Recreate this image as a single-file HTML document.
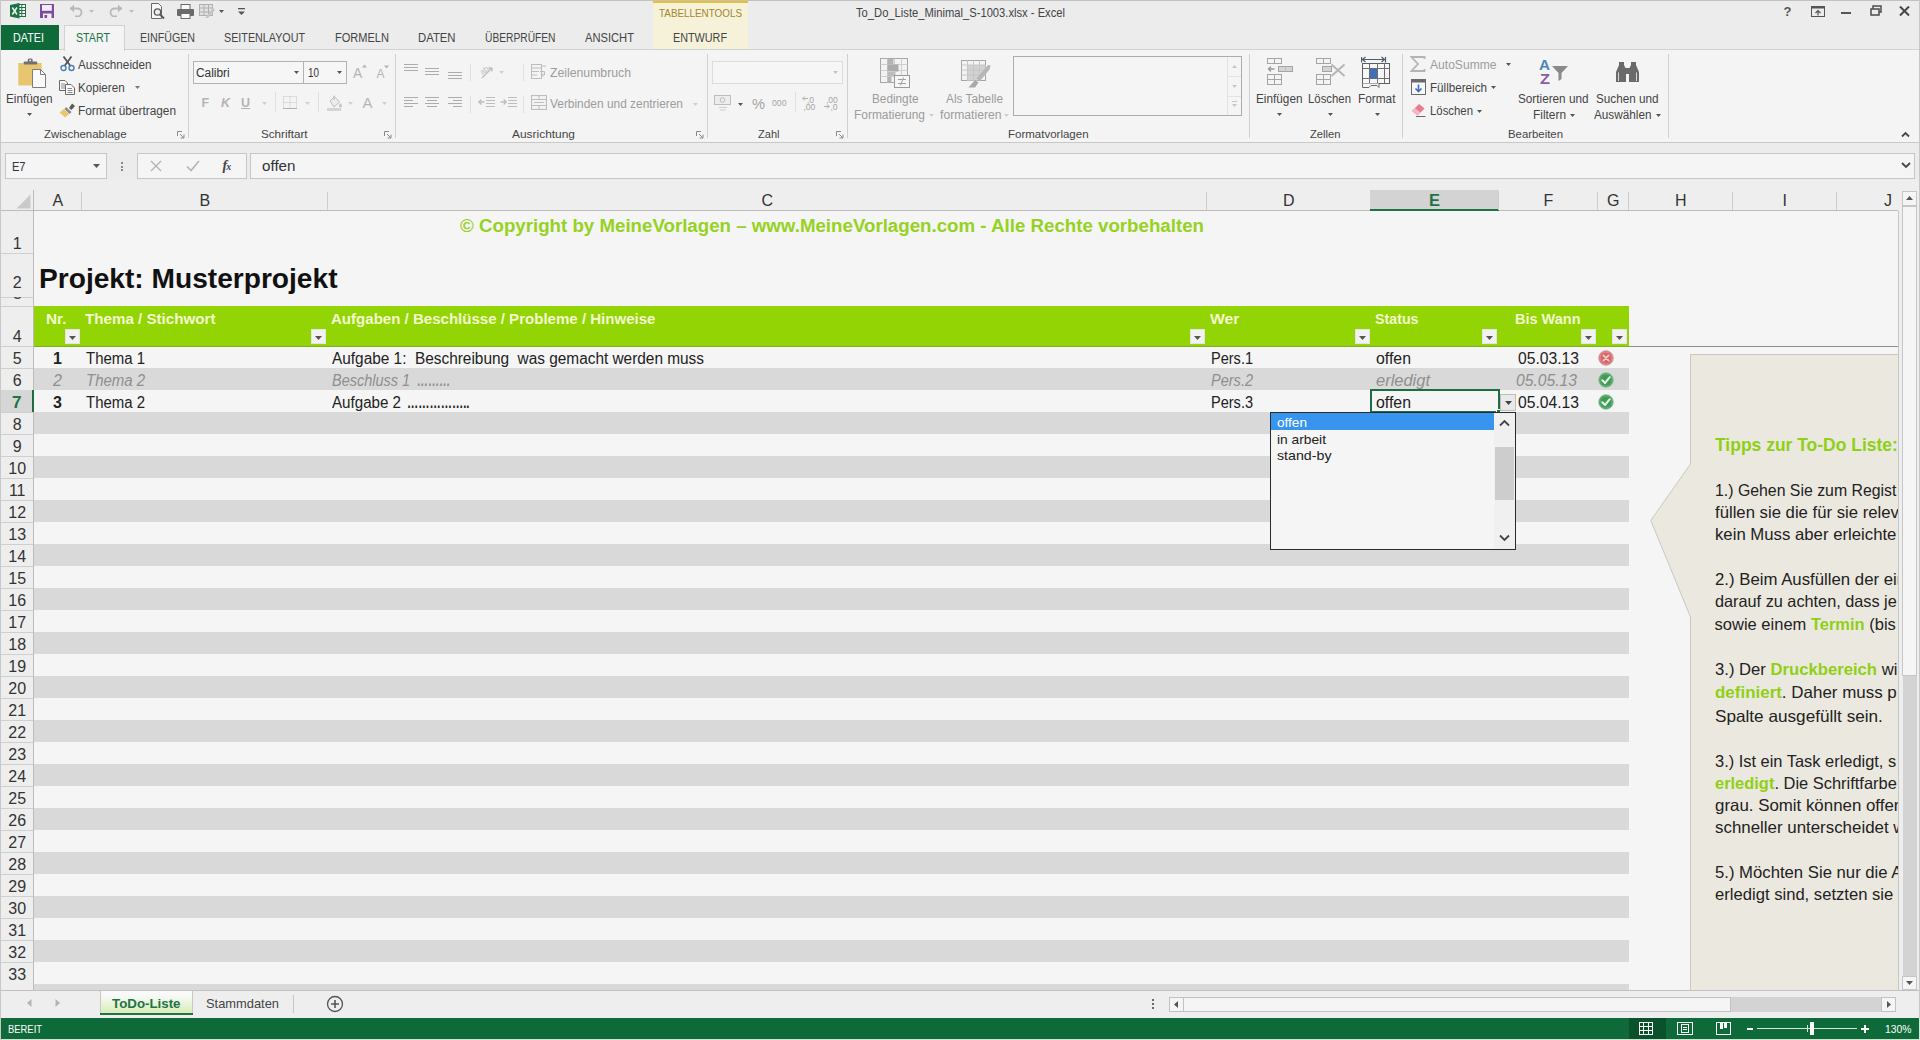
<!DOCTYPE html>
<html lang="de"><head><meta charset="utf-8"><title>To_Do_Liste_Minimal_S-1003.xlsx - Excel</title>
<style>
html,body{margin:0;padding:0;}
body{width:1920px;height:1040px;overflow:hidden;position:relative;background:#f4f4f4;font-family:"Liberation Sans",sans-serif;}
.b{position:absolute;box-sizing:border-box;display:block;}
.t{position:absolute;white-space:pre;display:block;}
</style></head>
<body>
<div class="b" style="left:0px;top:0px;width:1920px;height:50px;background:#ececec;"></div>
<div class="b" style="left:653px;top:0px;width:95px;height:49px;background:#f6f2da;"></div>
<div class="b" style="left:653px;top:0px;width:95px;height:3px;background:#e6c232;"></div>
<span class="t" style="top:8px;font-size:11px;line-height:11px;color:#a4862c;left:659px;transform-origin:0 0;transform:scaleX(0.8970);">TABELLENTOOLS</span>
<span class="t" style="top:7px;font-size:12px;line-height:12px;color:#444;left:855.5px;transform-origin:0 0;transform:scaleX(0.9326);">To_Do_Liste_Minimal_S-1003.xlsx - Excel</span>
<div class="b" style="left:0px;top:50px;width:1920px;height:92px;background:#f4f4f4;"></div>
<div class="b" style="left:0px;top:49px;width:1920px;height:1px;background:#d2d2d2;"></div>
<div class="b" style="left:0px;top:142px;width:1920px;height:1px;background:#c8c8c8;"></div>
<div class="b" style="left:0px;top:25px;width:59px;height:25px;background:#0f6a3a;"></div>
<span class="t" style="top:32px;font-size:12.5px;line-height:12.5px;color:#ffffff;left:13px;transform-origin:0 0;transform:scaleX(0.8637);">DATEI</span>
<div class="b" style="left:64px;top:25px;width:61px;height:26px;background:#f4f4f4;border:1px solid #d2d2d2;border-bottom:none;"></div>
<span class="t" style="top:32px;font-size:12.5px;line-height:12.5px;color:#217346;left:76px;transform-origin:0 0;transform:scaleX(0.8537);">START</span>
<span class="t" style="top:32px;font-size:12.5px;line-height:12.5px;color:#444;left:140px;transform-origin:0 0;transform:scaleX(0.8515);">EINFÜGEN</span>
<span class="t" style="top:32px;font-size:12.5px;line-height:12.5px;color:#444;left:224px;transform-origin:0 0;transform:scaleX(0.8596);">SEITENLAYOUT</span>
<span class="t" style="top:32px;font-size:12.5px;line-height:12.5px;color:#444;left:335px;transform-origin:0 0;transform:scaleX(0.8834);">FORMELN</span>
<span class="t" style="top:32px;font-size:12.5px;line-height:12.5px;color:#444;left:418px;transform-origin:0 0;transform:scaleX(0.9050);">DATEN</span>
<span class="t" style="top:32px;font-size:12.5px;line-height:12.5px;color:#444;left:485px;transform-origin:0 0;transform:scaleX(0.8186);">ÜBERPRÜFEN</span>
<span class="t" style="top:32px;font-size:12.5px;line-height:12.5px;color:#444;left:585px;transform-origin:0 0;transform:scaleX(0.8929);">ANSICHT</span>
<span class="t" style="top:32px;font-size:12.5px;line-height:12.5px;color:#444;left:673px;transform-origin:0 0;transform:scaleX(0.8640);">ENTWURF</span>
<svg class="b" style="left:10px;top:3px;" width="16" height="16" viewBox="0 0 16 16"><rect x="8" y="1.5" width="7.5" height="12" fill="#fbfbfb" stroke="#1e7145" stroke-width="1"/><path d="M8 4.5H15.5M8 7.5H15.5M8 10.5H15.5M11.8 1.5V13.5" stroke="#1e7145" stroke-width="1"/><path d="M0 2L9.5 0V15.5L0 13.5Z" fill="#1e7145"/><path d="M2.3 4.5L7 11.5M7 4.5L2.3 11.5" stroke="#e8f3ec" stroke-width="1.6"/></svg>
<svg class="b" style="left:40px;top:4px;" width="14" height="14" viewBox="0 0 14 14"><path d="M0 0H14V14H0Z" fill="#7a4e9c"/><rect x="2" y="1" width="9.8" height="5.8" fill="#f3ecf8"/><rect x="3" y="9.5" width="8.5" height="4.5" fill="#f3ecf8"/><rect x="4.5" y="11" width="2.6" height="3" fill="#7a4e9c"/></svg>
<svg class="b" style="left:69px;top:4px;" width="15" height="13" viewBox="0 0 15 13"><path d="M1 4.5H8.5A4 4 0 0 1 8.5 12.5H6" fill="none" stroke="#b9b9b9" stroke-width="1.8"/><path d="M5 0.5L0.8 4.5L5 8.5Z" fill="#b9b9b9"/></svg>
<svg class="b" style="left:89.0px;top:9.5px;" width="5" height="3" viewBox="0 0 5 3"><path d="M0 0H5L2.5 3Z" fill="#bdbdbd"/></svg>
<svg class="b" style="left:108px;top:4px;" width="15" height="13" viewBox="0 0 15 13"><path d="M14 4.5H6.5A4 4 0 0 0 6.5 12.5H9" fill="none" stroke="#b9b9b9" stroke-width="1.8"/><path d="M10 0.5L14.2 4.5L10 8.5Z" fill="#b9b9b9"/></svg>
<svg class="b" style="left:128.5px;top:9.5px;" width="5" height="3" viewBox="0 0 5 3"><path d="M0 0H5L2.5 3Z" fill="#bdbdbd"/></svg>
<svg class="b" style="left:150px;top:3px;" width="15" height="17" viewBox="0 0 15 17"><path d="M1.5 0.5H8.5L11.5 3.5V15.5H1.5Z" fill="#f8f8f8" stroke="#6a6a6a"/><circle cx="7.5" cy="9" r="3.2" fill="#e8f0f6" stroke="#5a5a5a" stroke-width="1.3"/><path d="M10 11.5L14 15.5" stroke="#5a5a5a" stroke-width="2"/></svg>
<svg class="b" style="left:177px;top:4px;" width="17" height="15" viewBox="0 0 17 15"><rect x="4" y="0.5" width="9" height="5" fill="#fafafa" stroke="#6a6a6a"/><rect x="0" y="5" width="17" height="7" rx="1" fill="#6a6a6a"/><rect x="4" y="9.5" width="9" height="5" fill="#fafafa" stroke="#6a6a6a"/></svg>
<svg class="b" style="left:199px;top:4px;" width="16" height="15" viewBox="0 0 16 15"><rect x="0.5" y="0.5" width="13" height="11" fill="#e2e2e2" stroke="#b0b0b0"/><path d="M0.5 4H13.5M0.5 8H13.5M5 0.5V11.5M9.5 0.5V11.5" stroke="#b0b0b0"/><path d="M6 14L14 4L16 6L9 14Z" fill="#c6c6c6"/></svg>
<svg class="b" style="left:219.0px;top:10.0px;" width="5" height="3" viewBox="0 0 5 3"><path d="M0 0H5L2.5 3Z" fill="#555"/></svg>
<svg class="b" style="left:238px;top:8px;" width="7" height="8" viewBox="0 0 7 8"><rect x="0" y="0" width="7" height="1.3" fill="#555"/><path d="M0 3.5H7L3.5 7Z" fill="#555"/></svg>
<span class="t" style="top:5px;font-size:13px;line-height:13px;color:#555;font-weight:bold;left:1787.5px;transform-origin:0 0;transform:translateX(-50%);">?</span>
<svg class="b" style="left:1811px;top:6px;" width="14" height="11" viewBox="0 0 14 11"><rect x="0.5" y="0.5" width="13" height="10" fill="none" stroke="#555"/><rect x="0.5" y="0.5" width="13" height="2" fill="#555"/><path d="M7 9.5V4.5M4.5 7L7 4.5L9.5 7" stroke="#555" fill="none" stroke-width="1.2"/></svg>
<div class="b" style="left:1841px;top:12px;width:10px;height:2px;background:#555;"></div>
<svg class="b" style="left:1870px;top:5px;" width="12" height="11" viewBox="0 0 12 11"><rect x="3" y="1" width="8" height="6" fill="none" stroke="#555" stroke-width="1.6"/><rect x="1" y="4" width="8" height="6" fill="#ececec" stroke="#555" stroke-width="1.6"/></svg>
<svg class="b" style="left:1899px;top:6px;" width="11" height="10" viewBox="0 0 11 10"><path d="M1 0.5L10 9.5M10 0.5L1 9.5" stroke="#444" stroke-width="2"/></svg>
<span class="t" style="top:129px;font-size:11.5px;line-height:11.5px;color:#444;left:44px;transform-origin:0 0;transform:scaleX(0.9927);">Zwischenablage</span>
<span class="t" style="top:129px;font-size:11.5px;line-height:11.5px;color:#444;left:260.5px;transform-origin:0 0;transform:scaleX(1.0105);">Schriftart</span>
<span class="t" style="top:129px;font-size:11.5px;line-height:11.5px;color:#444;left:512px;transform-origin:0 0;transform:scaleX(1.0373);">Ausrichtung</span>
<span class="t" style="top:129px;font-size:11.5px;line-height:11.5px;color:#444;left:758px;transform-origin:0 0;transform:scaleX(0.9609);">Zahl</span>
<span class="t" style="top:129px;font-size:11.5px;line-height:11.5px;color:#444;left:1008px;transform-origin:0 0;">Formatvorlagen</span>
<span class="t" style="top:129px;font-size:11.5px;line-height:11.5px;color:#444;left:1310px;transform-origin:0 0;transform:scaleX(0.9736);">Zellen</span>
<span class="t" style="top:129px;font-size:11.5px;line-height:11.5px;color:#444;left:1507.5px;transform-origin:0 0;transform:scaleX(0.9888);">Bearbeiten</span>
<div class="b" style="left:188px;top:54px;width:1px;height:84px;background:#d0d0d0;"></div>
<div class="b" style="left:395px;top:54px;width:1px;height:84px;background:#d0d0d0;"></div>
<div class="b" style="left:707px;top:54px;width:1px;height:84px;background:#d0d0d0;"></div>
<div class="b" style="left:847px;top:54px;width:1px;height:84px;background:#d0d0d0;"></div>
<div class="b" style="left:1249px;top:54px;width:1px;height:84px;background:#d0d0d0;"></div>
<div class="b" style="left:1402px;top:54px;width:1px;height:84px;background:#d0d0d0;"></div>
<div class="b" style="left:1668px;top:54px;width:1px;height:84px;background:#d0d0d0;"></div>
<svg class="b" style="left:177px;top:131px;" width="8" height="8" viewBox="0 0 8 8"><path d="M0.5 5V0.5H5" fill="none" stroke="#8a8a8a"/><path d="M3 3L7 7M7 3.5V7H3.5" fill="none" stroke="#8a8a8a"/></svg>
<svg class="b" style="left:384px;top:131px;" width="8" height="8" viewBox="0 0 8 8"><path d="M0.5 5V0.5H5" fill="none" stroke="#8a8a8a"/><path d="M3 3L7 7M7 3.5V7H3.5" fill="none" stroke="#8a8a8a"/></svg>
<svg class="b" style="left:696px;top:131px;" width="8" height="8" viewBox="0 0 8 8"><path d="M0.5 5V0.5H5" fill="none" stroke="#8a8a8a"/><path d="M3 3L7 7M7 3.5V7H3.5" fill="none" stroke="#8a8a8a"/></svg>
<svg class="b" style="left:836px;top:131px;" width="8" height="8" viewBox="0 0 8 8"><path d="M0.5 5V0.5H5" fill="none" stroke="#8a8a8a"/><path d="M3 3L7 7M7 3.5V7H3.5" fill="none" stroke="#8a8a8a"/></svg>
<svg class="b" style="left:1901px;top:131px;" width="9" height="7" viewBox="0 0 9 7"><path d="M1 5.5L4.5 2L8 5.5" fill="none" stroke="#444" stroke-width="1.8"/></svg>
<svg class="b" style="left:17px;top:57px;" width="30" height="31" viewBox="0 0 30 31"><rect x="1.3" y="6" width="23.3" height="22.5" fill="#e8c670"/><rect x="6.8" y="4.4" width="13.4" height="3.2" rx="0.8" fill="#707070"/><rect x="10.7" y="1.4" width="5" height="4" rx="1.5" fill="#707070"/><circle cx="13.2" cy="3.4" r="0.9" fill="#f4f4f4"/><path d="M15.5 12.5H23.5L28.5 17.5V30.5H15.5Z" fill="#fafafa" stroke="#7d7d7d"/><path d="M23.5 12.5V17.5H28.5" fill="none" stroke="#7d7d7d"/></svg>
<span class="t" style="top:93px;font-size:12px;line-height:12px;color:#444444;left:6.3px;transform-origin:0 0;transform:scaleX(0.9815);">Einfügen</span>
<svg class="b" style="left:27.0px;top:113.0px;" width="5" height="3" viewBox="0 0 5 3"><path d="M0 0H5L2.5 3Z" fill="#555"/></svg>
<svg class="b" style="left:60px;top:56px;" width="15" height="16" viewBox="0 0 15 16"><path d="M3.5 0.5L10.5 10M11.5 0.5L4.5 10" stroke="#555" stroke-width="1.8" fill="none"/><circle cx="3.5" cy="12" r="2.5" fill="none" stroke="#4a7db5" stroke-width="1.4"/><circle cx="11.5" cy="12" r="2.5" fill="none" stroke="#4a7db5" stroke-width="1.4"/></svg>
<span class="t" style="top:59px;font-size:12px;line-height:12px;color:#444444;left:78.3px;transform-origin:0 0;transform:scaleX(0.9749);">Ausschneiden</span>
<svg class="b" style="left:59px;top:80px;" width="16" height="15" viewBox="0 0 16 15"><path d="M0.5 0.5H6L8.5 3V10.5H0.5Z" fill="#fafafa" stroke="#6a6a6a"/><path d="M2 4H6M2 6H6M2 8H6" stroke="#8a8a8a"/><path d="M6.5 4.5H12L15.5 8V14.5H6.5Z" fill="#fafafa" stroke="#6a6a6a"/><path d="M8.5 8.5H13M8.5 10.5H13.5M8.5 12.5H13.5" stroke="#8a8a8a"/></svg>
<span class="t" style="top:82px;font-size:12px;line-height:12px;color:#444444;left:78.3px;transform-origin:0 0;transform:scaleX(0.9720);">Kopieren</span>
<svg class="b" style="left:134.5px;top:86.0px;" width="5" height="3" viewBox="0 0 5 3"><path d="M0 0H5L2.5 3Z" fill="#777"/></svg>
<svg class="b" style="left:59px;top:103px;" width="17" height="15" viewBox="0 0 17 15"><path d="M10 5L13 0.5L16 3L12.5 7Z" fill="#5a5a5a"/><path d="M7 4L12.5 9L10.5 11L5.5 6Z" fill="#8a8a8a"/><path d="M5 6L10 11L6 14.5L0.5 9.5Z" fill="#e9c66c"/></svg>
<span class="t" style="top:105px;font-size:12px;line-height:12px;color:#444444;left:78.3px;transform-origin:0 0;transform:scaleX(0.9860);">Format übertragen</span>
<div class="b" style="left:193px;top:61px;width:111px;height:23px;background:#f6f6f6;border:1px solid #b2b2b2;"></div>
<div class="b" style="left:303px;top:61px;width:44px;height:23px;background:#f6f6f6;border:1px solid #b2b2b2;"></div>
<span class="t" style="top:67px;font-size:12px;line-height:12px;color:#333;left:196px;transform-origin:0 0;transform:scaleX(0.9907);">Calibri</span>
<span class="t" style="top:67px;font-size:12px;line-height:12px;color:#333;left:308px;transform-origin:0 0;transform:scaleX(0.8234);">10</span>
<svg class="b" style="left:294.0px;top:70.5px;" width="5" height="3" viewBox="0 0 5 3"><path d="M0 0H5L2.5 3Z" fill="#555"/></svg>
<svg class="b" style="left:337.0px;top:70.5px;" width="5" height="3" viewBox="0 0 5 3"><path d="M0 0H5L2.5 3Z" fill="#555"/></svg>
<span class="t" style="top:66px;font-size:14px;line-height:14px;color:#b4b4b4;left:353px;transform-origin:0 0;">A</span>
<svg class="b" style="left:362px;top:64px;" width="5" height="4" viewBox="0 0 5 4"><path d="M0 3.5L2.5 0.5L5 3.5Z" fill="#b4b4b4"/></svg>
<span class="t" style="top:68px;font-size:12px;line-height:12px;color:#b4b4b4;left:376.5px;transform-origin:0 0;">A</span>
<svg class="b" style="left:384px;top:65px;" width="5" height="4" viewBox="0 0 5 4"><path d="M0 0.5L2.5 3.5L5 0.5Z" fill="#b4b4b4"/></svg>
<span class="t" style="top:97px;font-size:12.5px;line-height:12.5px;color:#b4b4b4;font-weight:bold;left:201.5px;transform-origin:0 0;">F</span>
<span class="t" style="top:97px;font-size:12.5px;line-height:12.5px;color:#b4b4b4;font-weight:bold;font-style:italic;left:221px;transform-origin:0 0;">K</span>
<span class="t" style="top:97px;font-size:12.5px;line-height:12.5px;color:#b4b4b4;font-weight:bold;left:241px;transform-origin:0 0;text-decoration:underline;">U</span>
<svg class="b" style="left:262.0px;top:102.0px;" width="5" height="3" viewBox="0 0 5 3"><path d="M0 0H5L2.5 3Z" fill="#cfcfcf"/></svg>
<div class="b" style="left:275px;top:92px;width:1px;height:20px;background:#e0e0e0;"></div>
<svg class="b" style="left:283px;top:96px;" width="14" height="13" viewBox="0 0 14 13"><rect x="0.5" y="0.5" width="13" height="12" fill="none" stroke="#c4c4c4" stroke-dasharray="1 1"/><path d="M7 0.5V12.5M0.5 6.5H13.5" stroke="#c4c4c4" stroke-dasharray="1 1"/><path d="M0 12.5H14" stroke="#b0b0b0"/></svg>
<svg class="b" style="left:305.0px;top:102.0px;" width="5" height="3" viewBox="0 0 5 3"><path d="M0 0H5L2.5 3Z" fill="#cfcfcf"/></svg>
<div class="b" style="left:318px;top:92px;width:1px;height:20px;background:#e0e0e0;"></div>
<svg class="b" style="left:326px;top:95px;" width="17" height="16" viewBox="0 0 17 16"><path d="M4 6L8.5 1.5L13.5 7L8 12Z" fill="#ececec" stroke="#bdbdbd"/><path d="M8 0.5V5" stroke="#bdbdbd"/><path d="M14.5 8C14.5 8 16 10 16 11A1.5 1.5 0 0 1 13 11C13 10 14.5 8 14.5 8Z" fill="#c4c4c4"/><rect x="1" y="13" width="14" height="3" fill="#d4d4d4"/></svg>
<svg class="b" style="left:348.0px;top:102.0px;" width="5" height="3" viewBox="0 0 5 3"><path d="M0 0H5L2.5 3Z" fill="#cfcfcf"/></svg>
<span class="t" style="top:95px;font-size:15px;line-height:15px;color:#b4b4b4;left:362.5px;transform-origin:0 0;">A</span>
<svg class="b" style="left:382.0px;top:102.0px;" width="5" height="3" viewBox="0 0 5 3"><path d="M0 0H5L2.5 3Z" fill="#cfcfcf"/></svg>
<svg class="b" style="left:404px;top:64px;" width="14" height="9" viewBox="0 0 14 9"><rect x="0" y="0" width="14" height="1" fill="#acacac"/><rect x="0" y="3" width="14" height="1" fill="#acacac"/><rect x="0" y="6" width="14" height="1" fill="#acacac"/></svg>
<svg class="b" style="left:425px;top:68px;" width="14" height="9" viewBox="0 0 14 9"><rect x="0" y="0" width="14" height="1" fill="#acacac"/><rect x="0" y="3" width="14" height="1" fill="#acacac"/><rect x="0" y="6" width="14" height="1" fill="#acacac"/></svg>
<svg class="b" style="left:448px;top:72px;" width="14" height="9" viewBox="0 0 14 9"><rect x="0" y="0" width="14" height="1" fill="#acacac"/><rect x="0" y="3" width="14" height="1" fill="#acacac"/><rect x="0" y="6" width="14" height="1" fill="#acacac"/></svg>
<svg class="b" style="left:404px;top:97px;" width="14" height="12" viewBox="0 0 14 12"><rect x="0" y="0" width="14" height="1" fill="#acacac"/><rect x="0" y="3" width="9" height="1" fill="#acacac"/><rect x="0" y="6" width="14" height="1" fill="#acacac"/><rect x="0" y="9" width="9" height="1" fill="#acacac"/></svg>
<svg class="b" style="left:425px;top:97px;" width="14" height="12" viewBox="0 0 14 12"><rect x="0" y="0" width="14" height="1" fill="#acacac"/><rect x="2" y="3" width="10" height="1" fill="#acacac"/><rect x="0" y="6" width="14" height="1" fill="#acacac"/><rect x="2" y="9" width="10" height="1" fill="#acacac"/></svg>
<svg class="b" style="left:448px;top:97px;" width="14" height="12" viewBox="0 0 14 12"><rect x="0" y="0" width="14" height="1" fill="#acacac"/><rect x="5" y="3" width="9" height="1" fill="#acacac"/><rect x="0" y="6" width="14" height="1" fill="#acacac"/><rect x="5" y="9" width="9" height="1" fill="#acacac"/></svg>
<div class="b" style="left:470px;top:64px;width:1px;height:17px;background:#e0e0e0;"></div>
<div class="b" style="left:470px;top:96px;width:1px;height:17px;background:#e0e0e0;"></div>
<div class="b" style="left:523px;top:64px;width:1px;height:17px;background:#e0e0e0;"></div>
<div class="b" style="left:523px;top:96px;width:1px;height:17px;background:#e0e0e0;"></div>
<svg class="b" style="left:479px;top:64px;" width="16" height="15" viewBox="0 0 16 15"><text x="2" y="9" font-size="8" fill="#bdbdbd" transform="rotate(-40 6 8)" font-family="Liberation Sans">ab</text><path d="M3 14L13 4M13 4H9.5M13 4V7.5" stroke="#bdbdbd" fill="none" stroke-width="1.3"/></svg>
<svg class="b" style="left:498.5px;top:70.5px;" width="5" height="3" viewBox="0 0 5 3"><path d="M0 0H5L2.5 3Z" fill="#cfcfcf"/></svg>
<svg class="b" style="left:478px;top:97px;" width="17" height="12" viewBox="0 0 17 12"><path d="M8 0.5H17M8 3.5H17M8 6.5H17M8 9.5H17" stroke="#bdbdbd" transform="translate(0,0)"/><path d="M6.5 5H0.8M3.3 2.5L0.8 5L3.3 7.5" stroke="#bdbdbd" fill="none" stroke-width="1.3"/></svg>
<svg class="b" style="left:500px;top:97px;" width="17" height="12" viewBox="0 0 17 12"><path d="M8 0.5H17M8 3.5H17M8 6.5H17M8 9.5H17" stroke="#bdbdbd"/><path d="M0.5 5H6.2M3.7 2.5L6.2 5L3.7 7.5" stroke="#bdbdbd" fill="none" stroke-width="1.3"/></svg>
<svg class="b" style="left:531px;top:64px;" width="16" height="15" viewBox="0 0 16 15"><rect x="0.5" y="0.5" width="10" height="14" fill="none" stroke="#bdbdbd"/><path d="M0.5 4H10.5M0.5 7.5H8M0.5 11H6" stroke="#bdbdbd"/><path d="M9 7.5H13.5V11H10.5M12 9.5L10.5 11L12 12.5" stroke="#bdbdbd" fill="none"/><path d="M10.5 2H15" stroke="#bdbdbd"/></svg>
<span class="t" style="top:67px;font-size:12px;line-height:12px;color:#9c9c9c;left:550px;transform-origin:0 0;transform:scaleX(1.0205);">Zeilenumbruch</span>
<svg class="b" style="left:531px;top:95px;" width="16" height="15" viewBox="0 0 16 15"><rect x="0.5" y="0.5" width="15" height="14" fill="none" stroke="#bdbdbd" stroke-width="1.2"/><path d="M0.5 4.5H15.5M0.5 10.5H15.5M8 0.5V4.5M8 10.5V14.5" stroke="#bdbdbd"/><path d="M3 7.5H13" stroke="#bdbdbd"/></svg>
<span class="t" style="top:98px;font-size:12px;line-height:12px;color:#9c9c9c;left:550px;transform-origin:0 0;transform:scaleX(0.9917);">Verbinden und zentrieren</span>
<svg class="b" style="left:693.0px;top:102.5px;" width="5" height="3" viewBox="0 0 5 3"><path d="M0 0H5L2.5 3Z" fill="#cfcfcf"/></svg>
<div class="b" style="left:712px;top:61px;width:131px;height:23px;background:#f6f6f6;border:1px solid #dcdcdc;"></div>
<svg class="b" style="left:833.0px;top:71.0px;" width="5" height="3" viewBox="0 0 5 3"><path d="M0 0H5L2.5 3Z" fill="#c4c4c4"/></svg>
<svg class="b" style="left:714px;top:95px;" width="18" height="16" viewBox="0 0 18 16"><rect x="0.5" y="0.5" width="16" height="9" fill="#ededed" stroke="#bdbdbd"/><circle cx="8.5" cy="5" r="2.3" fill="none" stroke="#bdbdbd"/><path d="M5 12.5H13M6 15H12" stroke="#d0d0d0"/></svg>
<svg class="b" style="left:737.5px;top:102.5px;" width="5" height="3" viewBox="0 0 5 3"><path d="M0 0H5L2.5 3Z" fill="#555"/></svg>
<span class="t" style="top:96px;font-size:15px;line-height:15px;color:#a4a4a4;left:751.5px;transform-origin:0 0;transform:scaleX(0.9742);">%</span>
<span class="t" style="top:98px;font-size:9.5px;line-height:9.5px;color:#a4a4a4;left:771.5px;transform-origin:0 0;transform:scaleX(0.9143);">000</span>
<div class="b" style="left:795px;top:92px;width:1px;height:20px;background:#e0e0e0;"></div>
<span class="t" style="top:96px;font-size:8.5px;line-height:8.5px;color:#a4a4a4;left:807px;transform-origin:0 0;">,0</span>
<span class="t" style="top:103px;font-size:8.5px;line-height:8.5px;color:#a4a4a4;left:803.5px;transform-origin:0 0;">,00</span>
<svg class="b" style="left:802px;top:96px;" width="6" height="5" viewBox="0 0 6 5"><path d="M6 2.5H0.8M2.8 0.5L0.8 2.5L2.8 4.5" stroke="#b0b0b0" fill="none"/></svg>
<span class="t" style="top:96px;font-size:8.5px;line-height:8.5px;color:#a4a4a4;left:826px;transform-origin:0 0;">,00</span>
<span class="t" style="top:103px;font-size:8.5px;line-height:8.5px;color:#a4a4a4;left:830.5px;transform-origin:0 0;">,0</span>
<svg class="b" style="left:824px;top:104px;" width="6" height="5" viewBox="0 0 6 5"><path d="M0 2.5H5.2M3.2 0.5L5.2 2.5L3.2 4.5" stroke="#b0b0b0" fill="none"/></svg>
<svg class="b" style="left:880px;top:58px;" width="31" height="31" viewBox="0 0 31 31"><rect x="0.5" y="0.5" width="27" height="24" fill="#f3f3f3" stroke="#a6a6a6"/><path d="M7.5 0.5V24.5" stroke="#cfcfcf"/><path d="M14.5 0.5V24.5" stroke="#cfcfcf"/><path d="M21.5 0.5V24.5" stroke="#cfcfcf"/><path d="M0.5 6.5H27.5" stroke="#cfcfcf"/><path d="M0.5 12.5H27.5" stroke="#cfcfcf"/><path d="M0.5 18.5H27.5" stroke="#cfcfcf"/><rect x="7.5" y="1" width="6" height="5" fill="#b4b4b4"/><rect x="7.5" y="6.5" width="11" height="7" fill="#ababab"/><rect x="7.5" y="14" width="8" height="4" fill="#bcbcbc"/><rect x="7.5" y="18.5" width="4" height="6" fill="#b4b4b4"/><rect x="14.5" y="17.5" width="15" height="12" fill="#f6f6f6" stroke="#9a9a9a"/><path d="M18 21.5H26M18 25.5H26M23.5 19.5L20.5 27.5" stroke="#a0a0a0"/></svg>
<span class="t" style="top:93px;font-size:12px;line-height:12px;color:#9c9c9c;left:871.7px;transform-origin:0 0;transform:scaleX(0.9815);">Bedingte</span>
<span class="t" style="top:109px;font-size:12px;line-height:12px;color:#9c9c9c;left:854px;transform-origin:0 0;transform:scaleX(0.9947);">Formatierung</span>
<svg class="b" style="left:928.5px;top:114.0px;" width="5" height="3" viewBox="0 0 5 3"><path d="M0 0H5L2.5 3Z" fill="#cfcfcf"/></svg>
<svg class="b" style="left:961px;top:60px;" width="32" height="29" viewBox="0 0 32 29"><rect x="0.5" y="0.5" width="24" height="20" fill="#f3f3f3" stroke="#a6a6a6"/><path d="M6.5 5H24.5V12L16.5 20.5H6.5Z" fill="#d2d2d2"/><path d="M6.5 0.5V20.5" stroke="#c6c6c6"/><path d="M12.5 0.5V20.5" stroke="#c6c6c6"/><path d="M18.5 0.5V20.5" stroke="#c6c6c6"/><path d="M0.5 5.0H24.5" stroke="#c6c6c6"/><path d="M0.5 10.0H24.5" stroke="#c6c6c6"/><path d="M0.5 15.0H24.5" stroke="#c6c6c6"/><path d="M7.5 27.5L14 20L17.5 22.5L14 27.5Z" fill="#a8a8a8"/><path d="M15.5 18.5L27 5L29.5 5.5L28.5 9.5L19 21Z" fill="#b6b6b6"/></svg>
<span class="t" style="top:93px;font-size:12px;line-height:12px;color:#9c9c9c;left:946px;transform-origin:0 0;transform:scaleX(0.9857);">Als Tabelle</span>
<span class="t" style="top:109px;font-size:12px;line-height:12px;color:#9c9c9c;left:939.5px;transform-origin:0 0;transform:scaleX(1.0131);">formatieren</span>
<svg class="b" style="left:1004.0px;top:113.5px;" width="5" height="3" viewBox="0 0 5 3"><path d="M0 0H5L2.5 3Z" fill="#cfcfcf"/></svg>
<div class="b" style="left:1013px;top:56px;width:229px;height:60px;background:#f5f5f5;border:1px solid #acacac;"></div>
<div class="b" style="left:1227px;top:57px;width:1px;height:58px;background:#e2e2e2;"></div>
<div class="b" style="left:1228px;top:76px;width:13px;height:1px;background:#e2e2e2;"></div>
<div class="b" style="left:1228px;top:96px;width:13px;height:1px;background:#e2e2e2;"></div>
<svg class="b" style="left:1232px;top:65px;" width="5" height="3" viewBox="0 0 5 3"><path d="M0 3L2.5 0L5 3Z" fill="#c6c6c6"/></svg>
<svg class="b" style="left:1232px;top:85px;" width="5" height="3" viewBox="0 0 5 3"><path d="M0 0L2.5 3L5 0Z" fill="#c6c6c6"/></svg>
<svg class="b" style="left:1232px;top:101px;" width="5" height="7" viewBox="0 0 5 7"><path d="M0 0.5H5" stroke="#c6c6c6"/><path d="M0 3L2.5 6L5 3Z" fill="#c6c6c6"/></svg>
<svg class="b" style="left:1267px;top:57px;" width="27" height="29" viewBox="0 0 27 29"><rect x="0.5" y="1.5" width="14" height="5" fill="#f4f4f4" stroke="#a4a4a4"/><path d="M7.5 1.5V6.5" stroke="#a4a4a4"/><rect x="11.5" y="9.5" width="14" height="5" fill="#d4d4d4" stroke="#a4a4a4"/><path d="M18.5 9.5V14.5" stroke="#bcbcbc"/><path d="M7.5 12H1.5M4 9.5L1.5 12L4 14.5" stroke="#9a9a9a" fill="none" stroke-width="1.4"/><rect x="0.5" y="17.5" width="14" height="10" fill="#f4f4f4" stroke="#a4a4a4"/><path d="M7.5 17.5V27.5M0.5 22.5H14.5" stroke="#a4a4a4"/></svg>
<span class="t" style="top:93px;font-size:12px;line-height:12px;color:#444444;left:1256px;transform-origin:0 0;transform:scaleX(0.9815);">Einfügen</span>
<svg class="b" style="left:1277.0px;top:113.0px;" width="5" height="3" viewBox="0 0 5 3"><path d="M0 0H5L2.5 3Z" fill="#555"/></svg>
<svg class="b" style="left:1316px;top:57px;" width="31" height="29" viewBox="0 0 31 29"><rect x="0.5" y="1.5" width="14" height="5" fill="#f4f4f4" stroke="#a4a4a4"/><path d="M7.5 1.5V6.5" stroke="#a4a4a4"/><rect x="6.5" y="9.5" width="9" height="5" fill="#d4d4d4" stroke="#a4a4a4"/><rect x="0.5" y="17.5" width="14" height="10" fill="#f4f4f4" stroke="#a4a4a4"/><path d="M7.5 17.5V27.5M0.5 22.5H14.5" stroke="#a4a4a4"/><path d="M15.5 7.5L28.5 19M28.5 7.5L15.5 19" stroke="#b4b4b4" stroke-width="1.8"/></svg>
<span class="t" style="top:93px;font-size:12px;line-height:12px;color:#444444;left:1308px;transform-origin:0 0;transform:scaleX(0.9477);">Löschen</span>
<svg class="b" style="left:1327.5px;top:113.0px;" width="5" height="3" viewBox="0 0 5 3"><path d="M0 0H5L2.5 3Z" fill="#555"/></svg>
<svg class="b" style="left:1361px;top:56px;" width="30" height="33" viewBox="0 0 30 33"><path d="M1.5 3.5H23.5M0.5 1V6.5M24.5 1V6.5M4.5 1L1.5 3.5L4.5 6M20.5 1L23.5 3.5L20.5 6" stroke="#4d5b6b" fill="none" stroke-width="1.2"/><rect x="1.5" y="7.5" width="27" height="20" fill="#f8f8f8" stroke="#5e5e5e"/><path d="M8.5 7.5V27.5M16.5 7.5V27.5M23.5 7.5V27.5M1.5 12.5H28.5M1.5 22.5H28.5" stroke="#6e6e6e"/><rect x="9" y="13" width="7" height="9.5" fill="#3f6fb5"/><path d="M1.5 27.5V31.5H8L10 29.5H16L18 31.5V27.5" stroke="#6a6a6a" fill="#f4f4f4"/></svg>
<span class="t" style="top:93px;font-size:12px;line-height:12px;color:#444444;left:1357.5px;transform-origin:0 0;transform:scaleX(0.9864);">Format</span>
<svg class="b" style="left:1374.5px;top:113.0px;" width="5" height="3" viewBox="0 0 5 3"><path d="M0 0H5L2.5 3Z" fill="#555"/></svg>
<svg class="b" style="left:1410px;top:56px;" width="16" height="16" viewBox="0 0 16 16"><path d="M14.5 3V1H1.5L8 8L1.5 15H14.5V13" fill="none" stroke="#b4b4b4" stroke-width="1.8"/></svg>
<span class="t" style="top:59px;font-size:12px;line-height:12px;color:#9c9c9c;left:1429.5px;transform-origin:0 0;transform:scaleX(1.0071);">AutoSumme</span>
<svg class="b" style="left:1506.0px;top:63.0px;" width="5" height="3" viewBox="0 0 5 3"><path d="M0 0H5L2.5 3Z" fill="#555"/></svg>
<svg class="b" style="left:1411px;top:79px;" width="15" height="16" viewBox="0 0 15 16"><rect x="0.5" y="0.5" width="14" height="15" fill="#f8f8f8" stroke="#6a6a6a"/><rect x="0.5" y="0.5" width="14" height="3" fill="#6a6a6a"/><path d="M7.5 5.5V12M4.5 9.5L7.5 12.5L10.5 9.5" stroke="#3f6fb5" stroke-width="1.6" fill="none"/></svg>
<span class="t" style="top:82px;font-size:12px;line-height:12px;color:#444444;left:1429.5px;transform-origin:0 0;transform:scaleX(0.9710);">Füllbereich</span>
<svg class="b" style="left:1491.0px;top:86.0px;" width="5" height="3" viewBox="0 0 5 3"><path d="M0 0H5L2.5 3Z" fill="#555"/></svg>
<svg class="b" style="left:1411px;top:103px;" width="15" height="14" viewBox="0 0 15 14"><path d="M1 8L8 1L13.5 5.5L6.5 12.5Z" fill="#e9798c"/><path d="M1 8L4 5L9.5 9.5L6.5 12.5Z" fill="#f4b6c0"/><path d="M5 13.5H14.5" stroke="#6a6a6a"/></svg>
<span class="t" style="top:105px;font-size:12px;line-height:12px;color:#444444;left:1429.5px;transform-origin:0 0;transform:scaleX(0.9477);">Löschen</span>
<svg class="b" style="left:1476.5px;top:109.5px;" width="5" height="3" viewBox="0 0 5 3"><path d="M0 0H5L2.5 3Z" fill="#555"/></svg>
<span class="t" style="top:57px;font-size:15px;line-height:15px;color:#4a86b8;font-weight:bold;left:1539px;transform-origin:0 0;transform:scaleX(1.0144);">A</span>
<span class="t" style="top:71px;font-size:15px;line-height:15px;color:#8a5ba8;font-weight:bold;left:1539.5px;transform-origin:0 0;transform:scaleX(1.0903);">Z</span>
<svg class="b" style="left:1552px;top:66px;" width="16" height="15" viewBox="0 0 16 15"><path d="M0 0H16L9.5 7V13L6.5 15V7Z" fill="#8a8a8a"/></svg>
<span class="t" style="top:93px;font-size:12px;line-height:12px;color:#444444;left:1518px;transform-origin:0 0;transform:scaleX(0.9785);">Sortieren und</span>
<span class="t" style="top:109px;font-size:12px;line-height:12px;color:#444444;left:1533px;transform-origin:0 0;transform:scaleX(0.9897);">Filtern</span>
<svg class="b" style="left:1569.5px;top:113.5px;" width="5" height="3" viewBox="0 0 5 3"><path d="M0 0H5L2.5 3Z" fill="#555"/></svg>
<svg class="b" style="left:1614px;top:60px;" width="27" height="23" viewBox="0 0 27 23"><path d="M2 22V12L5 5V2H10V5L12 9V22ZM15 22V9L17 5V2H22V5L25 12V22Z" fill="#6a6a6a"/><rect x="11" y="8" width="5" height="6" fill="#6a6a6a"/><path d="M4.5 12.5V21M22.5 12.5V21" stroke="#f4f4f4" stroke-width="0.8"/></svg>
<span class="t" style="top:93px;font-size:12px;line-height:12px;color:#444444;left:1596px;transform-origin:0 0;transform:scaleX(0.9756);">Suchen und</span>
<span class="t" style="top:109px;font-size:12px;line-height:12px;color:#444444;left:1594px;transform-origin:0 0;transform:scaleX(0.9792);">Auswählen</span>
<svg class="b" style="left:1655.5px;top:113.5px;" width="5" height="3" viewBox="0 0 5 3"><path d="M0 0H5L2.5 3Z" fill="#555"/></svg>
<div class="b" style="left:0px;top:143px;width:1920px;height:47px;background:#ececec;"></div>
<div class="b" style="left:5px;top:153px;width:102px;height:26px;background:#f5f5f5;border:1px solid #c6c6c6;"></div>
<span class="t" style="top:160px;font-size:13px;line-height:13px;color:#333;left:12px;transform-origin:0 0;transform:scaleX(0.8487);">E7</span>
<svg class="b" style="left:92.5px;top:163.5px;" width="7" height="4" viewBox="0 0 7 4"><path d="M0 0H7L3.5 4Z" fill="#555"/></svg>
<div class="b" style="left:121px;top:162px;width:2px;height:2px;background:#8a8a8a;"></div>
<div class="b" style="left:121px;top:165.5px;width:2px;height:2px;background:#8a8a8a;"></div>
<div class="b" style="left:121px;top:169px;width:2px;height:2px;background:#8a8a8a;"></div>
<div class="b" style="left:137px;top:153px;width:110px;height:26px;background:#f5f5f5;border:1px solid #c6c6c6;"></div>
<svg class="b" style="left:150px;top:160px;" width="12" height="12" viewBox="0 0 12 12"><path d="M1 1L11 11M11 1L1 11" stroke="#b4b4b4" stroke-width="1.4"/></svg>
<svg class="b" style="left:186px;top:160px;" width="14" height="12" viewBox="0 0 14 12"><path d="M1 6.5L5 10.5L13 1" stroke="#b4b4b4" stroke-width="1.6" fill="none"/></svg>
<span class="t" style="top:159px;font-size:14px;line-height:14px;color:#444;font-weight:bold;font-style:italic;font-family:'Liberation Serif',serif;left:222.5px;transform-origin:0 0;">f<span style="font-size:10px;margin-left:-1px;">x</span></span>
<div class="b" style="left:250px;top:153px;width:1665px;height:26px;background:#f5f5f5;border:1px solid #c6c6c6;"></div>
<span class="t" style="top:159px;font-size:14px;line-height:14px;color:#333;left:262px;transform-origin:0 0;transform:scaleX(1.0845);">offen</span>
<svg class="b" style="left:1901px;top:162px;" width="10" height="7" viewBox="0 0 10 7"><path d="M1 1L5 5L9 1" fill="none" stroke="#444" stroke-width="1.8"/></svg>
<div class="b" style="left:0px;top:190px;width:1898px;height:800px;background:#f5f5f5;"></div>
<div class="b" style="left:0px;top:180px;width:1920px;height:31px;background:#eeeeee;"></div>
<div class="b" style="left:0px;top:210px;width:1898px;height:1px;background:#bcbcbc;"></div>
<svg class="b" style="left:16px;top:194px;" width="15" height="15" viewBox="0 0 15 15"><path d="M14.5 0.5V14.5H0.5Z" fill="#c9c9c9"/></svg>
<span class="t" style="top:193px;font-size:16px;line-height:16px;color:#333;left:57.8px;transform-origin:0 0;transform:translateX(-50%);">A</span>
<div class="b" style="left:81px;top:192px;width:1px;height:18px;background:#cdcdcd;"></div>
<span class="t" style="top:193px;font-size:16px;line-height:16px;color:#333;left:204.8px;transform-origin:0 0;transform:translateX(-50%);">B</span>
<div class="b" style="left:327px;top:192px;width:1px;height:18px;background:#cdcdcd;"></div>
<span class="t" style="top:193px;font-size:16px;line-height:16px;color:#333;left:767.3px;transform-origin:0 0;transform:translateX(-50%);">C</span>
<div class="b" style="left:1206px;top:192px;width:1px;height:18px;background:#cdcdcd;"></div>
<span class="t" style="top:193px;font-size:16px;line-height:16px;color:#333;left:1288.8px;transform-origin:0 0;transform:translateX(-50%);">D</span>
<div class="b" style="left:1370px;top:192px;width:1px;height:18px;background:#cdcdcd;"></div>
<div class="b" style="left:1370px;top:190px;width:129px;height:21px;background:#d3d3d3;"></div>
<div class="b" style="left:1370px;top:209px;width:129px;height:2px;background:#217346;"></div>
<span class="t" style="top:193px;font-size:16px;line-height:16px;color:#217346;font-weight:bold;left:1429.30px;transform-origin:0 0;transform:scaleX(1.0307);">E</span>
<div class="b" style="left:1498px;top:192px;width:1px;height:18px;background:#cdcdcd;"></div>
<span class="t" style="top:193px;font-size:16px;line-height:16px;color:#333;left:1548.3px;transform-origin:0 0;transform:translateX(-50%);">F</span>
<div class="b" style="left:1597px;top:192px;width:1px;height:18px;background:#cdcdcd;"></div>
<span class="t" style="top:193px;font-size:16px;line-height:16px;color:#333;left:1613.3px;transform-origin:0 0;transform:translateX(-50%);">G</span>
<div class="b" style="left:1628px;top:192px;width:1px;height:18px;background:#cdcdcd;"></div>
<span class="t" style="top:193px;font-size:16px;line-height:16px;color:#333;left:1680.8px;transform-origin:0 0;transform:translateX(-50%);">H</span>
<div class="b" style="left:1732px;top:192px;width:1px;height:18px;background:#cdcdcd;"></div>
<span class="t" style="top:193px;font-size:16px;line-height:16px;color:#333;left:1784.8px;transform-origin:0 0;transform:translateX(-50%);">I</span>
<div class="b" style="left:1836px;top:192px;width:1px;height:18px;background:#cdcdcd;"></div>
<span class="t" style="top:193px;font-size:16px;line-height:16px;color:#333;left:1888px;transform-origin:0 0;transform:translateX(-50%);">J</span>
<div class="b" style="left:0px;top:211px;width:33px;height:779px;background:#eeeeee;"></div>
<div class="b" style="left:33px;top:190px;width:1px;height:800px;background:#bcbcbc;"></div>
<span class="t" style="top:236px;font-size:16px;line-height:16px;color:#333;left:17.2px;transform-origin:0 0;transform:translateX(-50%);">1</span>
<div class="b" style="left:0px;top:253px;width:33px;height:1px;background:#cfcfcf;"></div>
<span class="t" style="top:275px;font-size:16px;line-height:16px;color:#333;left:17.2px;transform-origin:0 0;transform:translateX(-50%);">2</span>
<div class="b" style="left:0px;top:297px;width:33px;height:1px;background:#cfcfcf;"></div>
<span class="t" style="top:329px;font-size:16px;line-height:16px;color:#333;left:17.2px;transform-origin:0 0;transform:translateX(-50%);">4</span>
<div class="b" style="left:0px;top:346px;width:33px;height:1px;background:#cfcfcf;"></div>
<span class="t" style="top:351px;font-size:16px;line-height:16px;color:#333;left:17.2px;transform-origin:0 0;transform:translateX(-50%);">5</span>
<div class="b" style="left:0px;top:368px;width:33px;height:1px;background:#cfcfcf;"></div>
<span class="t" style="top:373px;font-size:16px;line-height:16px;color:#333;left:17.2px;transform-origin:0 0;transform:translateX(-50%);">6</span>
<div class="b" style="left:0px;top:390px;width:33px;height:1px;background:#cfcfcf;"></div>
<div class="b" style="left:0px;top:390px;width:33px;height:22px;background:#d6d6d6;"></div>
<div class="b" style="left:32px;top:390px;width:2px;height:22px;background:#1f6e43;"></div>
<span class="t" style="top:395px;font-size:16px;line-height:16px;color:#217346;font-weight:bold;left:12.45px;transform-origin:0 0;transform:scaleX(1.0667);">7</span>
<div class="b" style="left:0px;top:412px;width:33px;height:1px;background:#cfcfcf;"></div>
<span class="t" style="top:417px;font-size:16px;line-height:16px;color:#333;left:17.2px;transform-origin:0 0;transform:translateX(-50%);">8</span>
<div class="b" style="left:0px;top:434px;width:33px;height:1px;background:#cfcfcf;"></div>
<span class="t" style="top:439px;font-size:16px;line-height:16px;color:#333;left:17.2px;transform-origin:0 0;transform:translateX(-50%);">9</span>
<div class="b" style="left:0px;top:456px;width:33px;height:1px;background:#cfcfcf;"></div>
<span class="t" style="top:461px;font-size:16px;line-height:16px;color:#333;left:17.2px;transform-origin:0 0;transform:translateX(-50%);">10</span>
<div class="b" style="left:0px;top:478px;width:33px;height:1px;background:#cfcfcf;"></div>
<span class="t" style="top:483px;font-size:16px;line-height:16px;color:#333;left:17.2px;transform-origin:0 0;transform:translateX(-50%);">11</span>
<div class="b" style="left:0px;top:500px;width:33px;height:1px;background:#cfcfcf;"></div>
<span class="t" style="top:505px;font-size:16px;line-height:16px;color:#333;left:17.2px;transform-origin:0 0;transform:translateX(-50%);">12</span>
<div class="b" style="left:0px;top:522px;width:33px;height:1px;background:#cfcfcf;"></div>
<span class="t" style="top:527px;font-size:16px;line-height:16px;color:#333;left:17.2px;transform-origin:0 0;transform:translateX(-50%);">13</span>
<div class="b" style="left:0px;top:544px;width:33px;height:1px;background:#cfcfcf;"></div>
<span class="t" style="top:549px;font-size:16px;line-height:16px;color:#333;left:17.2px;transform-origin:0 0;transform:translateX(-50%);">14</span>
<div class="b" style="left:0px;top:566px;width:33px;height:1px;background:#cfcfcf;"></div>
<span class="t" style="top:571px;font-size:16px;line-height:16px;color:#333;left:17.2px;transform-origin:0 0;transform:translateX(-50%);">15</span>
<div class="b" style="left:0px;top:588px;width:33px;height:1px;background:#cfcfcf;"></div>
<span class="t" style="top:593px;font-size:16px;line-height:16px;color:#333;left:17.2px;transform-origin:0 0;transform:translateX(-50%);">16</span>
<div class="b" style="left:0px;top:610px;width:33px;height:1px;background:#cfcfcf;"></div>
<span class="t" style="top:615px;font-size:16px;line-height:16px;color:#333;left:17.2px;transform-origin:0 0;transform:translateX(-50%);">17</span>
<div class="b" style="left:0px;top:632px;width:33px;height:1px;background:#cfcfcf;"></div>
<span class="t" style="top:637px;font-size:16px;line-height:16px;color:#333;left:17.2px;transform-origin:0 0;transform:translateX(-50%);">18</span>
<div class="b" style="left:0px;top:654px;width:33px;height:1px;background:#cfcfcf;"></div>
<span class="t" style="top:659px;font-size:16px;line-height:16px;color:#333;left:17.2px;transform-origin:0 0;transform:translateX(-50%);">19</span>
<div class="b" style="left:0px;top:676px;width:33px;height:1px;background:#cfcfcf;"></div>
<span class="t" style="top:681px;font-size:16px;line-height:16px;color:#333;left:17.2px;transform-origin:0 0;transform:translateX(-50%);">20</span>
<div class="b" style="left:0px;top:698px;width:33px;height:1px;background:#cfcfcf;"></div>
<span class="t" style="top:703px;font-size:16px;line-height:16px;color:#333;left:17.2px;transform-origin:0 0;transform:translateX(-50%);">21</span>
<div class="b" style="left:0px;top:720px;width:33px;height:1px;background:#cfcfcf;"></div>
<span class="t" style="top:725px;font-size:16px;line-height:16px;color:#333;left:17.2px;transform-origin:0 0;transform:translateX(-50%);">22</span>
<div class="b" style="left:0px;top:742px;width:33px;height:1px;background:#cfcfcf;"></div>
<span class="t" style="top:747px;font-size:16px;line-height:16px;color:#333;left:17.2px;transform-origin:0 0;transform:translateX(-50%);">23</span>
<div class="b" style="left:0px;top:764px;width:33px;height:1px;background:#cfcfcf;"></div>
<span class="t" style="top:769px;font-size:16px;line-height:16px;color:#333;left:17.2px;transform-origin:0 0;transform:translateX(-50%);">24</span>
<div class="b" style="left:0px;top:786px;width:33px;height:1px;background:#cfcfcf;"></div>
<span class="t" style="top:791px;font-size:16px;line-height:16px;color:#333;left:17.2px;transform-origin:0 0;transform:translateX(-50%);">25</span>
<div class="b" style="left:0px;top:808px;width:33px;height:1px;background:#cfcfcf;"></div>
<span class="t" style="top:813px;font-size:16px;line-height:16px;color:#333;left:17.2px;transform-origin:0 0;transform:translateX(-50%);">26</span>
<div class="b" style="left:0px;top:830px;width:33px;height:1px;background:#cfcfcf;"></div>
<span class="t" style="top:835px;font-size:16px;line-height:16px;color:#333;left:17.2px;transform-origin:0 0;transform:translateX(-50%);">27</span>
<div class="b" style="left:0px;top:852px;width:33px;height:1px;background:#cfcfcf;"></div>
<span class="t" style="top:857px;font-size:16px;line-height:16px;color:#333;left:17.2px;transform-origin:0 0;transform:translateX(-50%);">28</span>
<div class="b" style="left:0px;top:874px;width:33px;height:1px;background:#cfcfcf;"></div>
<span class="t" style="top:879px;font-size:16px;line-height:16px;color:#333;left:17.2px;transform-origin:0 0;transform:translateX(-50%);">29</span>
<div class="b" style="left:0px;top:896px;width:33px;height:1px;background:#cfcfcf;"></div>
<span class="t" style="top:901px;font-size:16px;line-height:16px;color:#333;left:17.2px;transform-origin:0 0;transform:translateX(-50%);">30</span>
<div class="b" style="left:0px;top:918px;width:33px;height:1px;background:#cfcfcf;"></div>
<span class="t" style="top:923px;font-size:16px;line-height:16px;color:#333;left:17.2px;transform-origin:0 0;transform:translateX(-50%);">31</span>
<div class="b" style="left:0px;top:940px;width:33px;height:1px;background:#cfcfcf;"></div>
<span class="t" style="top:945px;font-size:16px;line-height:16px;color:#333;left:17.2px;transform-origin:0 0;transform:translateX(-50%);">32</span>
<div class="b" style="left:0px;top:962px;width:33px;height:1px;background:#cfcfcf;"></div>
<span class="t" style="top:967px;font-size:16px;line-height:16px;color:#333;left:17.2px;transform-origin:0 0;transform:translateX(-50%);">33</span>
<div class="b" style="left:0px;top:984px;width:33px;height:1px;background:#cfcfcf;"></div>
<div class="b" style="left:0px;top:306px;width:33px;height:1px;background:#cfcfcf;"></div>
<div class="b" style="left:0px;top:297px;width:33px;height:9px;overflow:hidden;"><span class="t" style="left:13px;top:-11px;font-size:16px;line-height:16px;color:#444;">3</span></div>
<div class="b" style="left:0px;top:984px;width:33px;height:6px;background:#eeeeee;"></div>
<div class="b" style="left:34px;top:368px;width:1595px;height:22px;background:#d9d9d9;"></div>
<div class="b" style="left:34px;top:412px;width:1595px;height:22px;background:#d9d9d9;"></div>
<div class="b" style="left:34px;top:456px;width:1595px;height:22px;background:#d9d9d9;"></div>
<div class="b" style="left:34px;top:500px;width:1595px;height:22px;background:#d9d9d9;"></div>
<div class="b" style="left:34px;top:544px;width:1595px;height:22px;background:#d9d9d9;"></div>
<div class="b" style="left:34px;top:588px;width:1595px;height:22px;background:#d9d9d9;"></div>
<div class="b" style="left:34px;top:632px;width:1595px;height:22px;background:#d9d9d9;"></div>
<div class="b" style="left:34px;top:676px;width:1595px;height:22px;background:#d9d9d9;"></div>
<div class="b" style="left:34px;top:720px;width:1595px;height:22px;background:#d9d9d9;"></div>
<div class="b" style="left:34px;top:764px;width:1595px;height:22px;background:#d9d9d9;"></div>
<div class="b" style="left:34px;top:808px;width:1595px;height:22px;background:#d9d9d9;"></div>
<div class="b" style="left:34px;top:852px;width:1595px;height:22px;background:#d9d9d9;"></div>
<div class="b" style="left:34px;top:896px;width:1595px;height:22px;background:#d9d9d9;"></div>
<div class="b" style="left:34px;top:940px;width:1595px;height:22px;background:#d9d9d9;"></div>
<div class="b" style="left:34px;top:984px;width:1595px;height:6px;background:#d9d9d9;"></div>
<span class="t" style="top:217px;font-size:18px;line-height:18px;color:#95d222;font-weight:bold;left:459.9px;transform-origin:0 0;transform:scaleX(1.0385);">© Copyright by MeineVorlagen – www.MeineVorlagen.com - Alle Rechte vorbehalten</span>
<span class="t" style="top:265px;font-size:28px;line-height:28px;color:#111;font-weight:bold;left:38.7px;transform-origin:0 0;transform:scaleX(1.0045);">Projekt: Musterprojekt</span>
<div class="b" style="left:34px;top:306px;width:1595px;height:40px;background:#93d404;"></div>
<span class="t" style="top:312px;font-size:14px;line-height:14px;color:#f3facf;font-weight:bold;left:46.4px;transform-origin:0 0;transform:scaleX(1.0970);">Nr.</span>
<span class="t" style="top:312px;font-size:14px;line-height:14px;color:#f3facf;font-weight:bold;left:85.4px;transform-origin:0 0;transform:scaleX(1.0823);">Thema / Stichwort</span>
<span class="t" style="top:312px;font-size:14px;line-height:14px;color:#f3facf;font-weight:bold;left:331.4px;transform-origin:0 0;transform:scaleX(1.0749);">Aufgaben / Beschlüsse / Probleme / Hinweise</span>
<span class="t" style="top:312px;font-size:14px;line-height:14px;color:#f3facf;font-weight:bold;left:1210.4px;transform-origin:0 0;transform:scaleX(1.1258);">Wer</span>
<span class="t" style="top:312px;font-size:14px;line-height:14px;color:#f3facf;font-weight:bold;left:1375.4px;transform-origin:0 0;transform:scaleX(1.0164);">Status</span>
<span class="t" style="top:312px;font-size:14px;line-height:14px;color:#f3facf;font-weight:bold;left:1515.4px;transform-origin:0 0;transform:scaleX(1.0353);">Bis Wann</span>
<div class="b" style="left:65px;top:329px;width:15px;height:15px;background:#f2f2f2;border:1px solid #e4e4e4;"></div>
<svg class="b" style="left:69.0px;top:335.5px;" width="7" height="4" viewBox="0 0 7 4"><path d="M0 0H7L3.5 4Z" fill="#555"/></svg>
<div class="b" style="left:311px;top:329px;width:15px;height:15px;background:#f2f2f2;border:1px solid #e4e4e4;"></div>
<svg class="b" style="left:315.0px;top:335.5px;" width="7" height="4" viewBox="0 0 7 4"><path d="M0 0H7L3.5 4Z" fill="#555"/></svg>
<div class="b" style="left:1190px;top:329px;width:15px;height:15px;background:#f2f2f2;border:1px solid #e4e4e4;"></div>
<svg class="b" style="left:1194.0px;top:335.5px;" width="7" height="4" viewBox="0 0 7 4"><path d="M0 0H7L3.5 4Z" fill="#555"/></svg>
<div class="b" style="left:1355px;top:329px;width:15px;height:15px;background:#f2f2f2;border:1px solid #e4e4e4;"></div>
<svg class="b" style="left:1359.0px;top:335.5px;" width="7" height="4" viewBox="0 0 7 4"><path d="M0 0H7L3.5 4Z" fill="#555"/></svg>
<div class="b" style="left:1482px;top:329px;width:15px;height:15px;background:#f2f2f2;border:1px solid #e4e4e4;"></div>
<svg class="b" style="left:1486.0px;top:335.5px;" width="7" height="4" viewBox="0 0 7 4"><path d="M0 0H7L3.5 4Z" fill="#555"/></svg>
<div class="b" style="left:1581px;top:329px;width:15px;height:15px;background:#f2f2f2;border:1px solid #e4e4e4;"></div>
<svg class="b" style="left:1585.0px;top:335.5px;" width="7" height="4" viewBox="0 0 7 4"><path d="M0 0H7L3.5 4Z" fill="#555"/></svg>
<div class="b" style="left:1612px;top:329px;width:15px;height:15px;background:#f2f2f2;border:1px solid #e4e4e4;"></div>
<svg class="b" style="left:1616.0px;top:335.5px;" width="7" height="4" viewBox="0 0 7 4"><path d="M0 0H7L3.5 4Z" fill="#555"/></svg>
<div class="b" style="left:34px;top:346px;width:1864px;height:1px;background:#8c8c8c;"></div>
<div class="b" style="left:34px;top:346px;width:1595px;height:1px;background:#7fae2a;"></div>
<span class="t" style="top:351px;font-size:16px;line-height:16px;color:#222;font-weight:bold;left:57.5px;transform-origin:0 0;transform:translateX(-50%);">1</span>
<span class="t" style="top:351px;font-size:16px;line-height:16px;color:#222;left:85.8px;transform-origin:0 0;transform:scaleX(0.9344);">Thema 1</span>
<span class="t" style="top:351px;font-size:16px;line-height:16px;color:#222;left:331.8px;transform-origin:0 0;transform:scaleX(0.9615);">Aufgabe 1:  Beschreibung  was gemacht werden muss</span>
<span class="t" style="top:351px;font-size:16px;line-height:16px;color:#222;left:1210.8px;transform-origin:0 0;transform:scaleX(0.9081);">Pers.1</span>
<span class="t" style="top:351px;font-size:16px;line-height:16px;color:#222;left:1375.8px;transform-origin:0 0;transform:scaleX(0.9916);">offen</span>
<span class="t" style="top:351px;font-size:16px;line-height:16px;color:#222;left:1517.8px;transform-origin:0 0;transform:scaleX(0.9794);">05.03.13</span>
<span class="t" style="top:373px;font-size:16px;line-height:16px;color:#8f8f8f;font-style:italic;left:57.5px;transform-origin:0 0;transform:translateX(-50%);">2</span>
<span class="t" style="top:373px;font-size:16px;line-height:16px;color:#8f8f8f;font-style:italic;left:85.8px;transform-origin:0 0;transform:scaleX(0.9344);">Thema 2</span>
<span class="t" style="top:373px;font-size:16px;line-height:16px;color:#8f8f8f;font-style:italic;left:331.8px;transform-origin:0 0;transform:scaleX(0.9042);">Beschluss 1</span>
<span class="t" style="top:373px;font-size:16px;line-height:16px;color:#8f8f8f;font-weight:bold;font-style:italic;left:416.5px;transform-origin:0 0;transform:scaleX(0.6979);">………</span>
<span class="t" style="top:373px;font-size:16px;line-height:16px;color:#8f8f8f;font-style:italic;left:1210.8px;transform-origin:0 0;transform:scaleX(0.9081);">Pers.2</span>
<span class="t" style="top:373px;font-size:16px;line-height:16px;color:#8f8f8f;font-style:italic;left:1375.8px;transform-origin:0 0;transform:scaleX(1.0289);">erledigt</span>
<span class="t" style="top:373px;font-size:16px;line-height:16px;color:#8f8f8f;font-style:italic;left:1515.8px;transform-origin:0 0;transform:scaleX(0.9794);">05.05.13</span>
<span class="t" style="top:395px;font-size:16px;line-height:16px;color:#222;font-weight:bold;left:57.5px;transform-origin:0 0;transform:translateX(-50%);">3</span>
<span class="t" style="top:395px;font-size:16px;line-height:16px;color:#222;left:85.8px;transform-origin:0 0;transform:scaleX(0.9344);">Thema 2</span>
<span class="t" style="top:395px;font-size:16px;line-height:16px;color:#222;left:331.8px;transform-origin:0 0;transform:scaleX(0.9458);">Aufgabe 2</span>
<span class="t" style="top:395px;font-size:16px;line-height:16px;color:#222;font-weight:bold;left:406.5px;transform-origin:0 0;transform:scaleX(0.7031);">……………..</span>
<span class="t" style="top:395px;font-size:16px;line-height:16px;color:#222;left:1210.8px;transform-origin:0 0;transform:scaleX(0.9081);">Pers.3</span>
<span class="t" style="top:395px;font-size:16px;line-height:16px;color:#222;left:1375.8px;transform-origin:0 0;transform:scaleX(0.9916);">offen</span>
<span class="t" style="top:395px;font-size:16px;line-height:16px;color:#222;left:1517.8px;transform-origin:0 0;transform:scaleX(0.9794);">05.04.13</span>
<svg class="b" style="left:1598px;top:350px;" width="16" height="16" viewBox="0 0 16 16"><circle cx="8" cy="8" r="7.3" fill="#d96666" stroke="#cfa9a8" stroke-width="1"/><circle cx="8" cy="8" r="6" fill="none" stroke="#e48d8b" stroke-width="1"/><path d="M5.4 5.4L10.6 10.6M10.6 5.4L5.4 10.6" stroke="#f1cccc" stroke-width="1.7" stroke-linecap="round"/></svg>
<svg class="b" style="left:1598px;top:371.5px;" width="16" height="16" viewBox="0 0 16 16"><circle cx="8" cy="8" r="7.3" fill="#3f9b55" stroke="#9cc3a5" stroke-width="1"/><circle cx="8" cy="8" r="6" fill="none" stroke="#5fb574" stroke-width="1"/><path d="M4.3 8.3L7 11L11.8 5.2" stroke="#eaf6ec" stroke-width="2" fill="none" stroke-linecap="round" stroke-linejoin="round"/></svg>
<svg class="b" style="left:1598px;top:393.5px;" width="16" height="16" viewBox="0 0 16 16"><circle cx="8" cy="8" r="7.3" fill="#3f9b55" stroke="#9cc3a5" stroke-width="1"/><circle cx="8" cy="8" r="6" fill="none" stroke="#5fb574" stroke-width="1"/><path d="M4.3 8.3L7 11L11.8 5.2" stroke="#eaf6ec" stroke-width="2" fill="none" stroke-linecap="round" stroke-linejoin="round"/></svg>
<div class="b" style="left:1370px;top:389px;width:130px;height:24px;border:2px solid #1f6e43;"></div>
<div class="b" style="left:1496px;top:409px;width:5px;height:5px;background:#217346;border:1px solid #f5f5f5;"></div>
<div class="b" style="left:1500px;top:394px;width:16px;height:17px;background:#e9e9e9;border:1px solid #bdbdbd;"></div>
<svg class="b" style="left:1504.5px;top:401.0px;" width="7" height="4" viewBox="0 0 7 4"><path d="M0 0H7L3.5 4Z" fill="#444"/></svg>
<div class="b" style="left:1650px;top:354px;width:248px;height:636px;overflow:hidden;"><svg class="b" style="left:0;top:0" width="260" height="640"><polygon points="40.5,0.5 260,0.5 260,640 40.5,640 40.5,263 0.8,166.5 40.5,110" fill="#ebe8df" stroke="#c9c7c0" stroke-width="1"/></svg></div>
<div class="b" style="left:1700px;top:420px;width:198px;height:560px;overflow:hidden;">
<span class="t" style="top:15px;font-size:19px;line-height:19px;color:#222;left:14.599999999999909px;transform-origin:0 0;transform:scaleX(0.9200);"><span style="color:#8fd017;font-weight:bold;">Tipps zur To-Do Liste:</span></span>
<span class="t" style="top:62px;font-size:16.5px;line-height:16.5px;color:#222;left:14.599999999999909px;transform-origin:0 0;transform:scaleX(0.9602);">1.) Gehen Sie zum Regist</span>
<span class="t" style="top:84px;font-size:16.5px;line-height:16.5px;color:#222;left:14.599999999999909px;transform-origin:0 0;transform:scaleX(1.0127);">füllen sie die für sie relevanten</span>
<span class="t" style="top:106px;font-size:16.5px;line-height:16.5px;color:#222;left:14.599999999999909px;transform-origin:0 0;transform:scaleX(1.0143);">kein Muss aber erleichte</span>
<span class="t" style="top:151px;font-size:16.5px;line-height:16.5px;color:#222;left:14.599999999999909px;transform-origin:0 0;transform:scaleX(1.0165);">2.) Beim Ausfüllen der einzelnen</span>
<span class="t" style="top:173px;font-size:16.5px;line-height:16.5px;color:#222;left:14.599999999999909px;transform-origin:0 0;transform:scaleX(0.9860);">darauf zu achten, dass je</span>
<span class="t" style="top:196px;font-size:16.5px;line-height:16.5px;color:#222;left:14.599999999999909px;transform-origin:0 0;">sowie einem <span style="color:#8fd017;font-weight:bold;">Termin</span> (bis</span>
<span class="t" style="top:241px;font-size:16.5px;line-height:16.5px;color:#222;left:14.599999999999909px;transform-origin:0 0;transform:scaleX(1.0097);">3.) Der <span style="color:#8fd017;font-weight:bold;">Druckbereich</span> wi</span>
<span class="t" style="top:264px;font-size:16.5px;line-height:16.5px;color:#222;left:14.599999999999909px;transform-origin:0 0;transform:scaleX(1.0273);"><span style="color:#8fd017;font-weight:bold;">definiert</span>. Daher muss p</span>
<span class="t" style="top:288px;font-size:16.5px;line-height:16.5px;color:#222;left:14.599999999999909px;transform-origin:0 0;transform:scaleX(1.0399);">Spalte ausgefüllt sein.</span>
<span class="t" style="top:333px;font-size:16.5px;line-height:16.5px;color:#222;left:14.599999999999909px;transform-origin:0 0;transform:scaleX(0.9945);">3.) Ist ein Task erledigt, s</span>
<span class="t" style="top:355px;font-size:16.5px;line-height:16.5px;color:#222;left:14.599999999999909px;transform-origin:0 0;transform:scaleX(0.9962);"><span style="color:#8fd017;font-weight:bold;">erledigt</span>. Die Schriftfarbe</span>
<span class="t" style="top:377px;font-size:16.5px;line-height:16.5px;color:#222;left:14.599999999999909px;transform-origin:0 0;transform:scaleX(1.0223);">grau. Somit können offene</span>
<span class="t" style="top:399px;font-size:16.5px;line-height:16.5px;color:#222;left:14.599999999999909px;transform-origin:0 0;transform:scaleX(1.0231);">schneller unterscheidet werden</span>
<span class="t" style="top:444px;font-size:16.5px;line-height:16.5px;color:#222;left:14.599999999999909px;transform-origin:0 0;transform:scaleX(1.0118);">5.) Möchten Sie nur die Aufgaben</span>
<span class="t" style="top:466px;font-size:16.5px;line-height:16.5px;color:#222;left:14.599999999999909px;transform-origin:0 0;transform:scaleX(1.0073);">erledigt sind, setzten sie</span>
</div>
<div class="b" style="left:1898px;top:180px;width:22px;height:810px;background:#eeeeee;"></div>
<div class="b" style="left:1898px;top:211px;width:1px;height:779px;background:#c6c6c6;"></div>
<div class="b" style="left:1903px;top:206px;width:14px;height:771px;background:#d3d3d3;"></div>
<div class="b" style="left:1902px;top:191px;width:15px;height:15px;background:#f5f5f5;border:1px solid #c6c6c6;"></div>
<svg class="b" style="left:1906px;top:196px;" width="7" height="4" viewBox="0 0 7 4"><path d="M0 4L3.5 0L7 4Z" fill="#555"/></svg>
<div class="b" style="left:1902px;top:206px;width:15px;height:470px;background:#f5f5f5;border:1px solid #c6c6c6;"></div>
<div class="b" style="left:1902px;top:976px;width:15px;height:14px;background:#f5f5f5;border:1px solid #c6c6c6;"></div>
<svg class="b" style="left:1906px;top:981px;" width="7" height="4" viewBox="0 0 7 4"><path d="M0 0L3.5 4L7 0Z" fill="#555"/></svg>
<div class="b" style="left:1270px;top:412px;width:246px;height:138px;background:#f5f5f5;border:1px solid #2b2b2b;"></div>
<div class="b" style="left:1271px;top:413px;width:223px;height:17px;background:#3795f0;"></div>
<span class="t" style="top:416px;font-size:13px;line-height:13px;color:#fff;left:1276.5px;transform-origin:0 0;transform:scaleX(1.0458);">offen</span>
<span class="t" style="top:433px;font-size:13px;line-height:13px;color:#222;left:1276.5px;transform-origin:0 0;transform:scaleX(1.0595);">in arbeit</span>
<span class="t" style="top:449px;font-size:13px;line-height:13px;color:#222;left:1276.5px;transform-origin:0 0;transform:scaleX(1.0927);">stand-by</span>
<div class="b" style="left:1494px;top:413px;width:21px;height:136px;background:#f0f0f0;"></div>
<div class="b" style="left:1495px;top:447px;width:19px;height:53px;background:#cdcdcd;"></div>
<svg class="b" style="left:1499px;top:419px;" width="11" height="8" viewBox="0 0 11 8"><path d="M1 6.5L5.5 2L10 6.5" fill="none" stroke="#444" stroke-width="1.8"/></svg>
<svg class="b" style="left:1499px;top:534px;" width="11" height="8" viewBox="0 0 11 8"><path d="M1 1.5L5.5 6L10 1.5" fill="none" stroke="#444" stroke-width="1.8"/></svg>
<div class="b" style="left:0px;top:990px;width:1920px;height:28px;background:#eeeeee;"></div>
<div class="b" style="left:0px;top:990px;width:1920px;height:1px;background:#c2c2c2;"></div>
<svg class="b" style="left:27px;top:999px;" width="5" height="8" viewBox="0 0 5 8"><path d="M4.5 0V8L0 4Z" fill="#b4b4b4"/></svg>
<svg class="b" style="left:55px;top:999px;" width="5" height="8" viewBox="0 0 5 8"><path d="M0.5 0V8L5 4Z" fill="#b4b4b4"/></svg>
<div class="b" style="left:100px;top:991px;width:93px;height:24px;background:linear-gradient(#fafafa 15%,#d4ecb2);border-left:1px solid #c8c8c8;border-right:1px solid #c8c8c8;"></div>
<div class="b" style="left:100px;top:1013px;width:93px;height:2px;background:#217346;"></div>
<span class="t" style="top:997px;font-size:13px;line-height:13px;color:#217346;font-weight:bold;left:112px;transform-origin:0 0;transform:scaleX(1.0236);">ToDo-Liste</span>
<span class="t" style="top:997px;font-size:13px;line-height:13px;color:#444;left:206px;transform-origin:0 0;transform:scaleX(0.9905);">Stammdaten</span>
<div class="b" style="left:293px;top:995px;width:1px;height:18px;background:#c6c6c6;"></div>
<svg class="b" style="left:326px;top:995px;" width="18" height="18" viewBox="0 0 18 18"><circle cx="9" cy="9" r="7.5" fill="none" stroke="#555" stroke-width="1.3"/><path d="M9 5V13M5 9H13" stroke="#555" stroke-width="1.6"/></svg>
<div class="b" style="left:1152px;top:999px;width:2px;height:2px;background:#666;"></div>
<div class="b" style="left:1152px;top:1003px;width:2px;height:2px;background:#666;"></div>
<div class="b" style="left:1152px;top:1007px;width:2px;height:2px;background:#666;"></div>
<div class="b" style="left:1183px;top:997px;width:699px;height:15px;background:#d3d3d3;"></div>
<div class="b" style="left:1169px;top:997px;width:15px;height:15px;background:#f5f5f5;border:1px solid #c2c2c2;"></div>
<svg class="b" style="left:1174px;top:1001px;" width="4" height="7" viewBox="0 0 4 7"><path d="M4 0V7L0 3.5Z" fill="#555"/></svg>
<div class="b" style="left:1183px;top:997px;width:548px;height:15px;background:#f5f5f5;border:1px solid #c2c2c2;"></div>
<div class="b" style="left:1881px;top:997px;width:15px;height:15px;background:#f5f5f5;border:1px solid #c2c2c2;"></div>
<svg class="b" style="left:1887px;top:1001px;" width="4" height="7" viewBox="0 0 4 7"><path d="M0 0V7L4 3.5Z" fill="#555"/></svg>
<div class="b" style="left:0px;top:1018px;width:1920px;height:22px;background:#0f6a3a;"></div>
<div class="b" style="left:0px;top:1039px;width:1920px;height:1px;background:#cfe3d6;"></div>
<span class="t" style="top:1024px;font-size:11.5px;line-height:11.5px;color:#fff;left:7.6px;transform-origin:0 0;transform:scaleX(0.8184);">BEREIT</span>
<div class="b" style="left:1629px;top:1018px;width:37px;height:21px;background:#0a522c;"></div>
<svg class="b" style="left:1639px;top:1022px;" width="14" height="13" viewBox="0 0 14 13"><rect x="0.5" y="0.5" width="13" height="12" fill="none" stroke="#ffffff"/><path d="M4.5 0.5V12.5M9.5 0.5V12.5M0.5 4.5H13.5M0.5 8.5H13.5" stroke="#ffffff"/></svg>
<svg class="b" style="left:1677px;top:1022px;" width="16" height="13" viewBox="0 0 16 13"><rect x="0.5" y="0.5" width="15" height="12" fill="none" stroke="#ffffff"/><rect x="4.5" y="2.5" width="7" height="8" fill="none" stroke="#ffffff"/><path d="M6 5.5H10M6 7.5H10" stroke="#ffffff"/></svg>
<svg class="b" style="left:1716px;top:1022px;" width="15" height="13" viewBox="0 0 15 13"><rect x="0.5" y="0.5" width="14" height="12" fill="none" stroke="#ffffff"/><rect x="4" y="1" width="3" height="6" fill="#ffffff"/><rect x="8" y="1" width="3" height="5" fill="#ffffff"/></svg>
<div class="b" style="left:1747px;top:1027.5px;width:6px;height:2px;background:#ffffff;"></div>
<div class="b" style="left:1757px;top:1028px;width:100px;height:1px;background:#d5e6db;"></div>
<div class="b" style="left:1807px;top:1025px;width:1px;height:7px;background:#d5e6db;"></div>
<div class="b" style="left:1810px;top:1022px;width:4px;height:13px;background:#ffffff;"></div>
<div class="b" style="left:1861px;top:1027.5px;width:8px;height:2px;background:#ffffff;"></div>
<div class="b" style="left:1864px;top:1024.5px;width:2px;height:8px;background:#ffffff;"></div>
<span class="t" style="top:1024px;font-size:11.5px;line-height:11.5px;color:#fff;left:1884.8px;transform-origin:0 0;transform:scaleX(0.9007);">130%</span>
<div class="b" style="left:0px;top:0px;width:1920px;height:1px;background:#c2c2c2;"></div>
<div class="b" style="left:0px;top:0px;width:1px;height:1040px;background:#c8c8c8;"></div>
<div class="b" style="left:1919px;top:0px;width:1px;height:1018px;background:#c8c8c8;"></div>
<div class="b" style="left:1919px;top:1018px;width:1px;height:22px;background:#d5e6db;"></div>
</body></html>
